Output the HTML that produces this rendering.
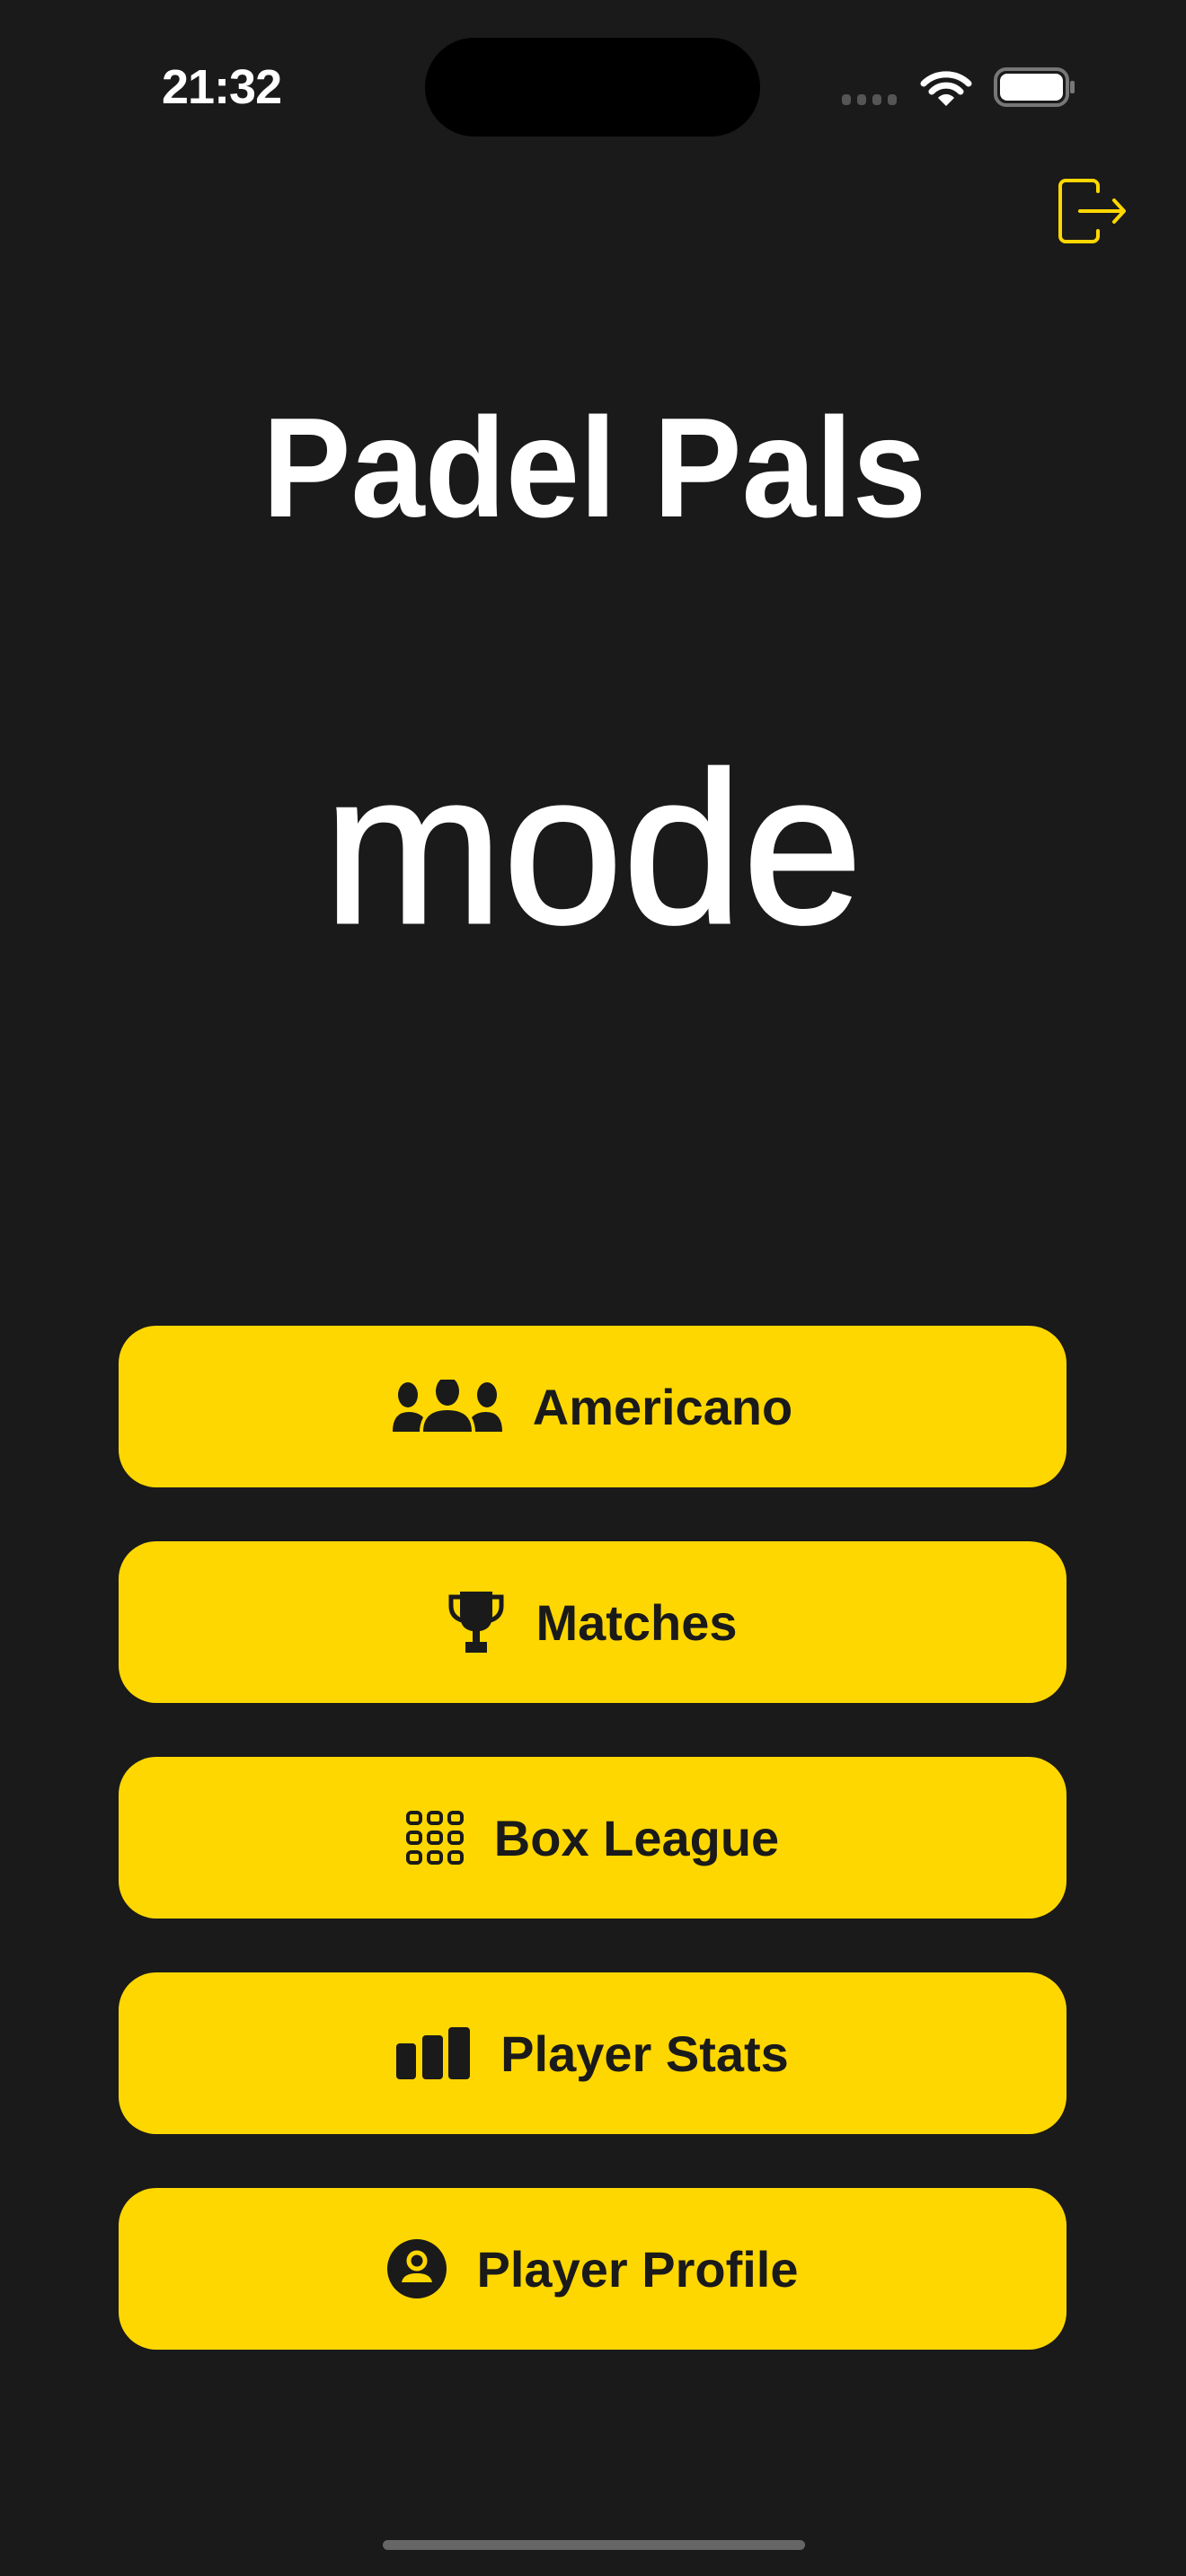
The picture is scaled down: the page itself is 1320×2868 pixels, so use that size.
<!DOCTYPE html>
<html><head><meta charset="utf-8"><style>
html,body{margin:0;padding:0;background:#1a1a1a;}
body{width:1320px;height:2868px;position:relative;overflow:hidden;font-family:"Liberation Sans",sans-serif;}
.btn{position:absolute;left:132px;width:1055px;height:180px;background:#FFD700;border-radius:42px;display:flex;align-items:center;justify-content:center;color:#1a1a1a;font-weight:bold;font-size:56px;gap:34px;}
.btn svg{display:block}
</style></head><body>
<!-- status bar -->
<div style="position:absolute;left:180px;top:66px;font-size:54px;font-weight:bold;color:#fff;letter-spacing:-1px;">21:32</div>
<div style="position:absolute;left:473px;top:42px;width:373px;height:110px;background:#000;border-radius:55px;"></div>
<svg style="position:absolute;left:930px;top:70px" width="280" height="52" viewBox="930 70 280 52">
<g fill="#555"><rect x="937" y="105" width="10" height="12" rx="4"/><rect x="954" y="105" width="10" height="12" rx="4"/><rect x="971" y="105" width="10" height="12" rx="4"/><rect x="988" y="105" width="10" height="12" rx="4"/></g>
<g fill="none" stroke="#fff" stroke-width="7" stroke-linecap="round"><path d="M1028 93 A36 36 0 0 1 1078 93"/><path d="M1037 102 A22 22 0 0 1 1069 102"/></g>
<path d="M1044 109 L1053 118 L1062 109 A12 12 0 0 0 1044 109Z" fill="#fff"/>
<rect x="1108" y="77" width="80" height="40" rx="12" fill="none" stroke="#777" stroke-width="4"/>
<rect x="1113" y="82" width="70" height="30" rx="8" fill="#fff"/>
<rect x="1191" y="90" width="5" height="14" rx="2" fill="#777"/>
</svg>
<!-- logout -->
<svg style="position:absolute;left:1170px;top:195px" width="90" height="80" viewBox="0 0 90 80" fill="none" stroke="#FFD700" stroke-width="4" stroke-linecap="round" stroke-linejoin="round">
<path d="M52 18 V12 A6 6 0 0 0 46 6 H16 A6 6 0 0 0 10 12 V68 A6 6 0 0 0 16 74 H46 A6 6 0 0 0 52 68 V62"/>
<path d="M32 40 H80 M70 28 L81 40 L70 52"/>
</svg>
<!-- title -->
<svg style="position:absolute;left:0;top:0" width="1320" height="1100">
<text x="292" y="575" font-family="Liberation Sans" font-weight="bold" font-size="158" fill="#fff" textLength="739" lengthAdjust="spacingAndGlyphs">Padel Pals</text>
<text x="360" y="1027" font-family="Liberation Sans" font-size="240" fill="#fff" stroke="#fff" stroke-width="3" textLength="600" lengthAdjust="spacingAndGlyphs">mode</text>
</svg>
<!-- buttons -->
<div class="btn" style="top:1476px">
<svg width="122" height="60" viewBox="0 0 122 60" fill="#1a1a1a"><ellipse cx="17" cy="17" rx="11" ry="14"/><ellipse cx="61" cy="13" rx="13" ry="16"/><ellipse cx="105" cy="17" rx="11" ry="14"/><path d="M0 58 Q0 36 18 36 Q28 36 34 42 Q30 50 30 58Z"/><path d="M92 58 Q92 50 88 42 Q94 36 104 36 Q122 36 122 58Z"/><path d="M34 58 Q34 34 61 34 Q88 34 88 58Z"/></svg>
<span>Americano</span></div>
<div class="btn" style="top:1716px">
<svg width="64" height="72" viewBox="0 0 64 72" fill="#1a1a1a"><path d="M14 2 H50 V28 Q50 44 36 46 V58 H44 V70 H20 V58 H28 V46 Q14 44 14 28Z"/><path d="M14 8 H4 V18 Q4 30 16 34" fill="none" stroke="#1a1a1a" stroke-width="5"/><path d="M50 8 H60 V18 Q60 30 48 34" fill="none" stroke="#1a1a1a" stroke-width="5"/></svg>
<span>Matches</span></div>
<div class="btn" style="top:1956px">
<svg width="64" height="60" viewBox="0 0 64 60" fill="none" stroke="#1a1a1a" stroke-width="4"><rect x="2" y="2" width="14" height="12" rx="4"/><rect x="25" y="2" width="14" height="12" rx="4"/><rect x="48" y="2" width="14" height="12" rx="4"/><rect x="2" y="24" width="14" height="12" rx="4"/><rect x="25" y="24" width="14" height="12" rx="4"/><rect x="48" y="24" width="14" height="12" rx="4"/><rect x="2" y="46" width="14" height="12" rx="4"/><rect x="25" y="46" width="14" height="12" rx="4"/><rect x="48" y="46" width="14" height="12" rx="4"/></svg>
<span>Box League</span></div>
<div class="btn" style="top:2196px">
<svg width="82" height="58" viewBox="0 0 82 58" fill="#1a1a1a"><rect x="0" y="18" width="22" height="40" rx="4"/><rect x="29" y="9" width="23" height="49" rx="4"/><rect x="58" y="0" width="24" height="58" rx="4"/></svg>
<span>Player Stats</span></div>
<div class="btn" style="top:2436px">
<svg width="66" height="66" viewBox="0 0 66 66"><circle cx="33" cy="33" r="33" fill="#1a1a1a"/><circle cx="33" cy="24" r="9" fill="none" stroke="#FFD700" stroke-width="5"/><path d="M16 48 Q18 38 33 38 Q48 38 50 48Z" fill="#FFD700"/></svg>
<span>Player Profile</span></div>
<div style="position:absolute;left:426px;top:2828px;width:470px;height:11px;border-radius:6px;background:#666;"></div>
</body></html>
